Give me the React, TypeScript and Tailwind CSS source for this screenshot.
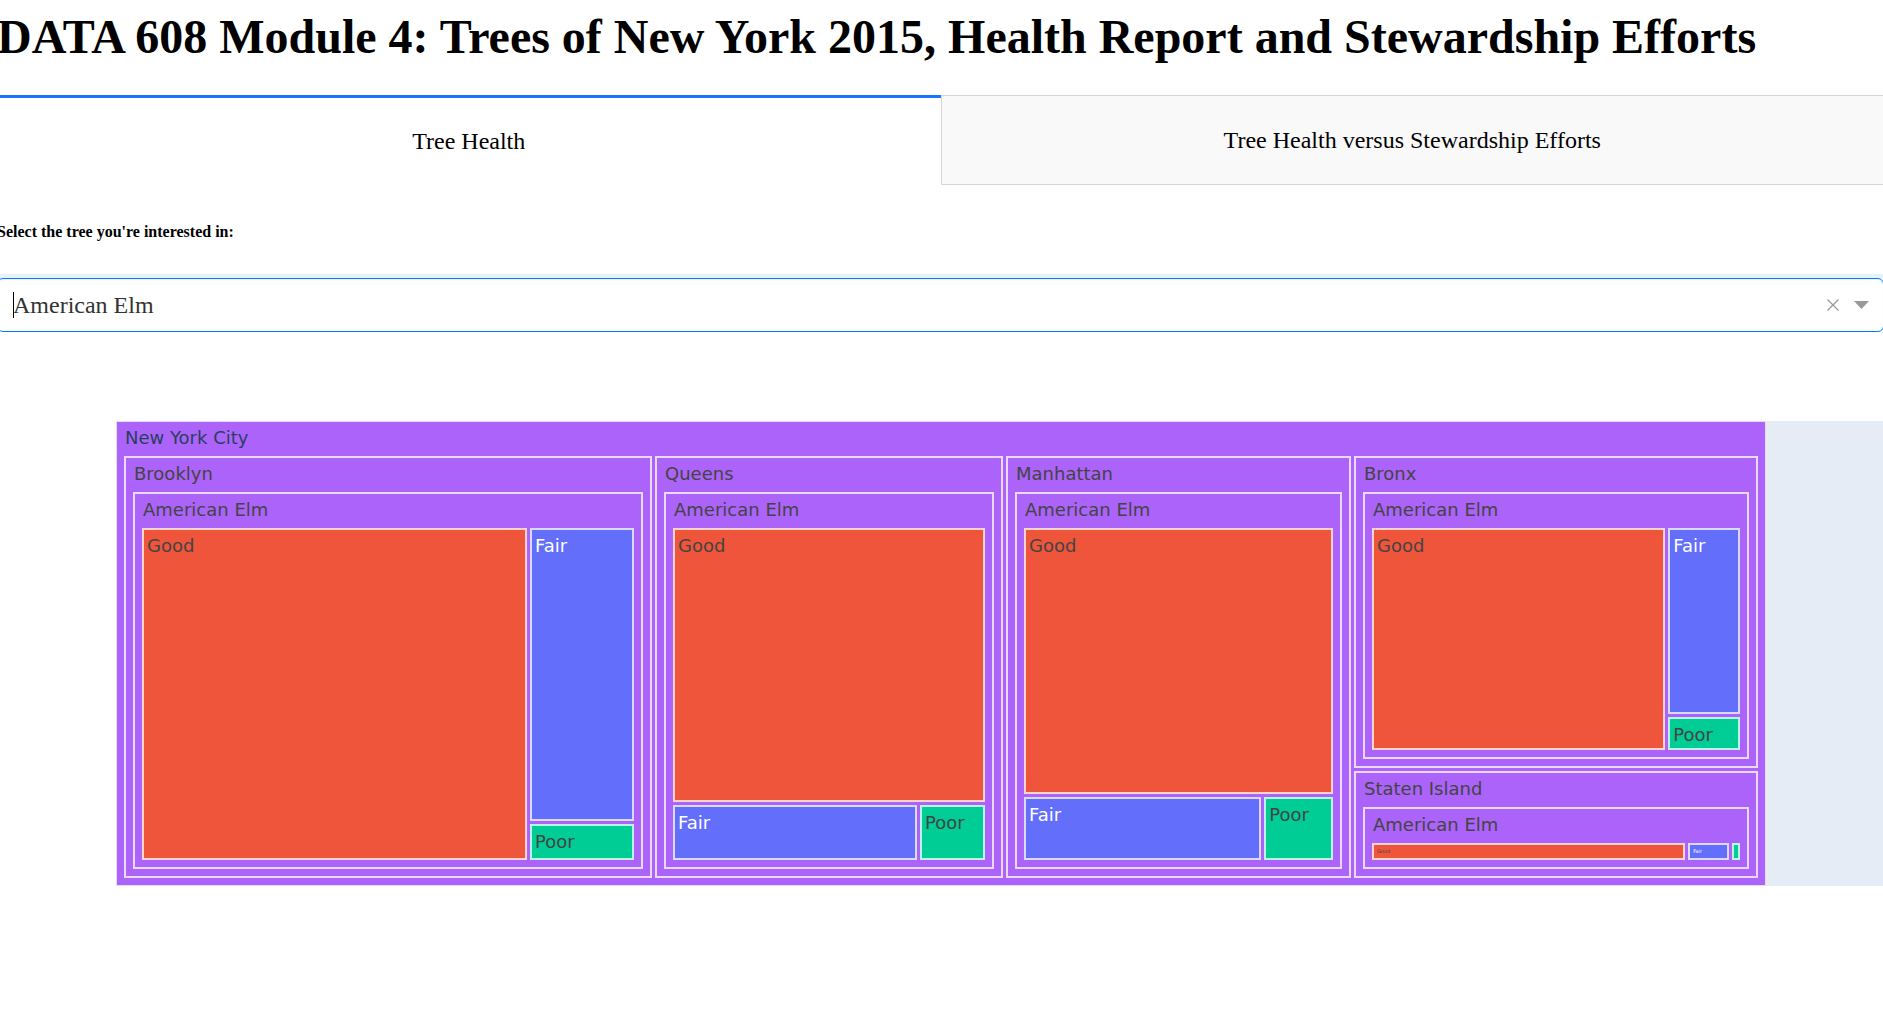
import { useState, type ReactNode } from "react";

const species = ["American Elm", "American Linden", "Ginkgo", "Honeylocust", "London Planetree", "Pin Oak"];

function Group({ label, className = "", children }: { label: string; className?: string; children: ReactNode }) {
  return (
    <section className={`flex min-h-0 min-w-0 flex-col border-2 border-white/75 bg-[#ab63fa] px-[7px] pb-[7px] ${className}`}>
      <h3 className="h-[34px] shrink-0 pt-1 pl-px text-lg leading-6 whitespace-nowrap text-[#444]">{label}</h3>
      {children}
    </section>
  );
}

const tones = {
  Good: "bg-[#ef553b] text-[#444]",
  Fair: "bg-[#636efa] text-white",
  Poor: "bg-[#00cc96] text-[#444]",
};

function Leaf({ name, small = false }: { name: keyof typeof tones; small?: boolean }) {
  return (
    <div
      className={`min-h-0 min-w-0 overflow-hidden border-2 border-white/75 pl-[3px] whitespace-nowrap ${tones[name]} ${
        small ? "pt-[3px] text-[5px] leading-[6px]" : "pt-1 text-lg leading-6"
      }`}
    >
      {name}
    </div>
  );
}

function TreeMap({ tree }: { tree: string }) {
  return (
    <div className="flex h-[465px] min-w-0 flex-1 flex-col border border-white/75 bg-[#ab63fa] px-[7px] pb-[7px] font-['DejaVu_Sans',sans-serif]">
      <h2 className="h-[34px] shrink-0 pt-1 pl-px text-lg leading-6 text-[#2a3f5f]">New York City</h2>
      <div className="grid min-h-0 flex-1 grid-cols-[528fr_348fr_345fr_404fr] gap-[3px]">
        <Group label="Brooklyn">
          <Group label={tree} className="flex-1">
            <div className="grid min-h-0 flex-1 grid-cols-[385fr_104fr] gap-[3px]">
              <Leaf name="Good" />
              <div className="grid min-h-0 grid-rows-[293fr_36fr] gap-[3px]">
                <Leaf name="Fair" />
                <Leaf name="Poor" />
              </div>
            </div>
          </Group>
        </Group>
        <Group label="Queens">
          <Group label={tree} className="flex-1">
            <div className="grid min-h-0 flex-1 grid-rows-[274fr_55fr] gap-[3px]">
              <Leaf name="Good" />
              <div className="grid min-h-0 grid-cols-[244fr_65fr] gap-[3px]">
                <Leaf name="Fair" />
                <Leaf name="Poor" />
              </div>
            </div>
          </Group>
        </Group>
        <Group label="Manhattan">
          <Group label={tree} className="flex-1">
            <div className="grid min-h-0 flex-1 grid-rows-[266fr_63fr] gap-[3px]">
              <Leaf name="Good" />
              <div className="grid min-h-0 grid-cols-[238fr_69fr] gap-[3px]">
                <Leaf name="Fair" />
                <Leaf name="Poor" />
              </div>
            </div>
          </Group>
        </Group>
        <div className="grid min-h-0 min-w-0 grid-rows-[312fr_107fr] gap-[3px]">
          <Group label="Bronx">
            <Group label={tree} className="flex-1">
              <div className="grid min-h-0 flex-1 grid-cols-[294fr_72fr] gap-[3px]">
                <Leaf name="Good" />
                <div className="grid min-h-0 grid-rows-[187fr_33fr] gap-[3px]">
                  <Leaf name="Fair" />
                  <Leaf name="Poor" />
                </div>
              </div>
            </Group>
          </Group>
          <Group label="Staten Island">
            <Group label={tree} className="flex-1">
              <div className="grid min-h-0 flex-1 grid-cols-[314fr_41fr_8fr] gap-[3px]">
                <Leaf name="Good" small />
                <Leaf name="Fair" small />
                <div className="min-w-0 border-2 border-white/75 bg-[#00cc96]" title="Poor" />
              </div>
            </Group>
          </Group>
        </div>
      </div>
    </div>
  );
}

export default function App() {
  const [tree, setTree] = useState("American Elm");
  return (
    <div className="overflow-hidden bg-white font-['Liberation_Serif',serif] text-black">
      <main className="-mr-px -ml-[3px]">
        <h1 className="pt-[9px] text-5xl leading-[56px] font-bold whitespace-nowrap">
          DATA 608 Module 4: Trees of New York 2015, Health Report and Stewardship Efforts
        </h1>

        <div role="tablist" className="mt-[30px] grid grid-cols-2">
          <button role="tab" aria-selected="true" className="h-[90px] border-t-3 border-[#1975fa] pb-0.5 text-2xl">
            Tree Health
          </button>
          <button role="tab" aria-selected="false" className="h-[90px] border border-[#d6d6d6] bg-[#f9f9f9] text-2xl">
            Tree Health versus Stewardship Efforts
          </button>
        </div>

        <label htmlFor="tree" className="mt-[35px] block text-base leading-6 font-bold">
          Select the tree you're interested in:
        </label>

        <div className="mt-[30px] border-t-4 border-[#e5f2ff]">
          <div className="relative flex h-[54px] items-center rounded-md border border-[#007eff] pr-3.5 shadow-[inset_0_1px_1px_rgba(0,0,0,0.075)]">
            <span aria-hidden="true" className="absolute left-[15px] h-[26px] w-px bg-black" />
            <select
              id="tree"
              value={tree}
              onChange={(e) => setTree(e.target.value)}
              className="h-full min-w-0 flex-1 appearance-none bg-transparent pl-[15px] text-2xl text-[#333] outline-none"
            >
              {species.map((s) => (
                <option key={s}>{s}</option>
              ))}
            </select>
            <button aria-label="Clear value" onClick={() => setTree(species[0])} className="mr-[15px]">
              <svg width="12" height="12" viewBox="0 0 12 12" stroke="#999" strokeWidth="1.2" fill="none">
                <path d="M.5.5 11.5 11.5M11.5.5.5 11.5" />
              </svg>
            </button>
            <svg width="15" height="8" viewBox="0 0 15 8" fill="#999" aria-hidden="true">
              <path d="M0 0H15L7.5 8Z" />
            </svg>
          </div>
        </div>

        <div className="mt-[89px] flex">
          <div className="w-[119px] shrink-0" />
          <TreeMap tree={tree} />
          <div className="w-[118px] shrink-0 bg-[#e5ecf6]" />
        </div>
      </main>
    </div>
  );
}
